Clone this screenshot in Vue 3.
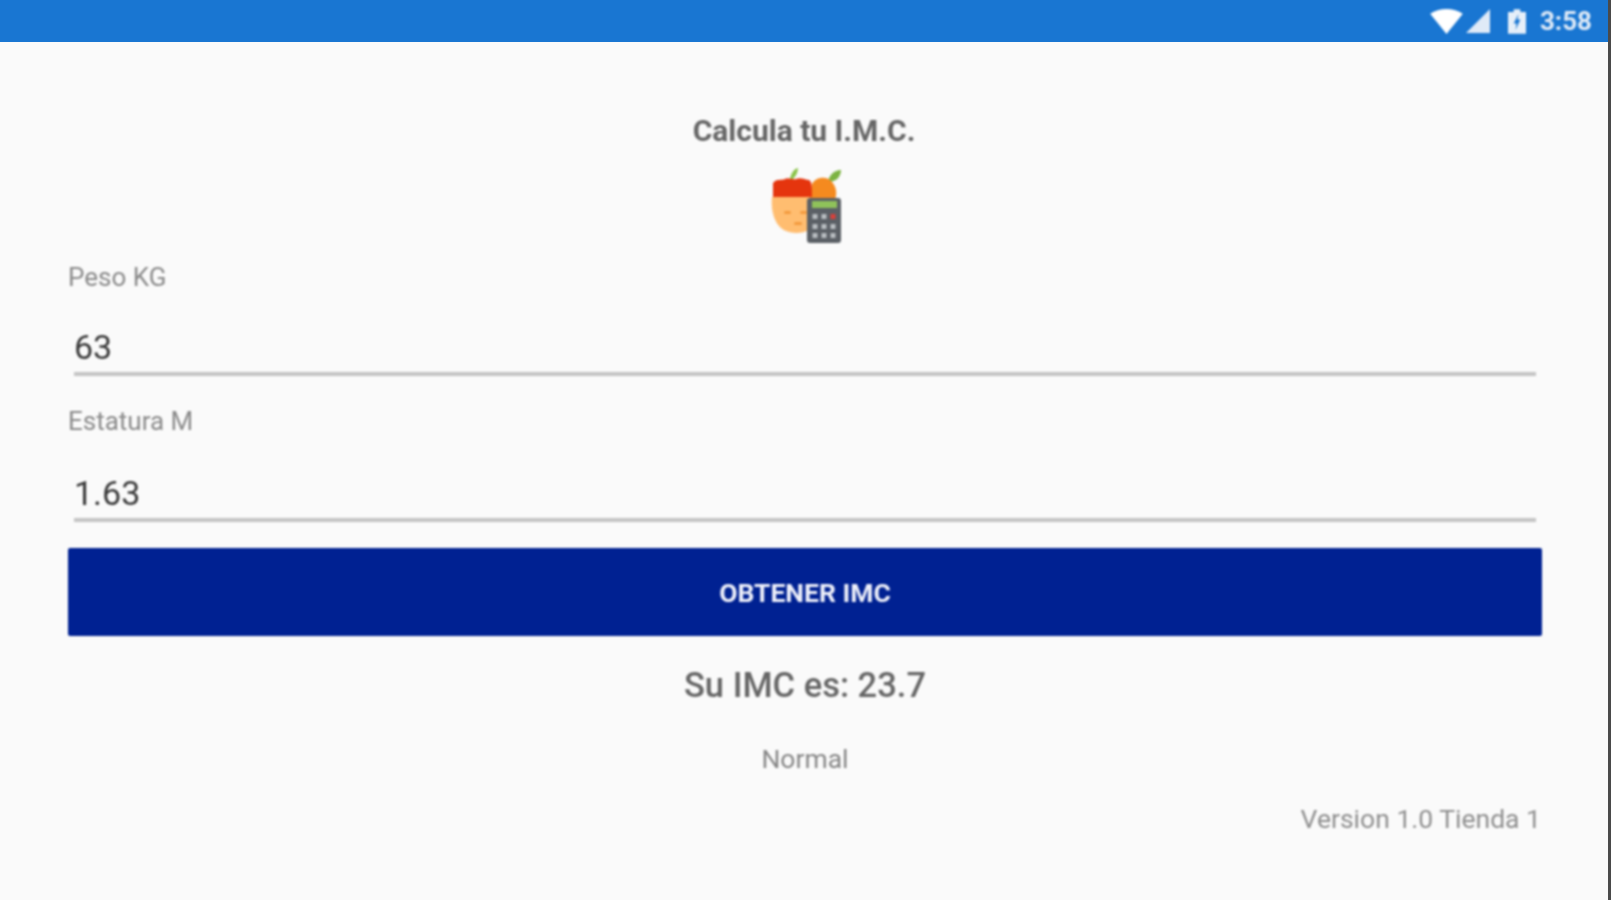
<script setup>
const fields = [
  { label: 'Peso KG', value: '63' },
  { label: 'Estatura M', value: '1.63' }
]
const keys = [
  { x: 44, y: 46, c: '#b9bdc1' }, { x: 53, y: 46, c: '#b9bdc1' }, { x: 62, y: 46, c: '#d8403a' },
  { x: 44, y: 56, c: '#b9bdc1' }, { x: 53, y: 56, c: '#b9bdc1' }, { x: 62, y: 56, c: '#b9bdc1' },
  { x: 44, y: 65, c: '#b9bdc1' }, { x: 53, y: 65, c: '#b9bdc1' }, { x: 62, y: 65, c: '#b9bdc1' }
]
</script>

<template>
  <div class="screen">
    <header class="status">
      <div class="status-items">
        <svg class="wifi" viewBox="0 0 34 26"><path d="M0 5C9-1.500 25-1.500 34 5L17 26Z" fill="#fff"/></svg>
        <svg class="signal" viewBox="0 0 24 24"><path d="M0 24L24 0V24Z" fill="#dfeaf7"/></svg>
        <svg class="battery" viewBox="0 0 19 26">
          <path d="M6 0H13V3H19V26H0V3H6Z" fill="#e6eff9"/>
          <path d="M11 5L6 15H9L8 22L13 11H10Z" fill="#1976d2"/>
        </svg>
        <span class="clock">3:58</span>
      </div>
    </header>
    <main class="body">
      <h1 class="title">Calcula tu I.M.C.</h1>
      <svg class="logo" viewBox="-2 0 72 76">
        <path d="M19 11C20 5 23 1 27 0C27 4 25 8 22 11Z" fill="#8bc34a"/>
        <path d="M57 14C58 7 63 2 70 2C70 9 65 14 57 14Z" fill="#7cb342"/>
        <path d="M41 16C45 8 57 8 61 14C66 20 66 26 64 32H38Z" fill="#f58a1f"/>
        <path d="M2 15C6 10 10 13 14 11C17 9 21 12 25 11C30 9 34 12 38 12C41 14 41 18 41 29H2Z" fill="#e5350e"/>
        <path d="M1 29H38V62C30 66 16 67 8 58C2 51 0 40 1 29Z" fill="#ffbd70"/>
        <g fill="#f39a3e">
          <rect x="13" y="43" width="7" height="3" rx="1.500"/>
          <rect x="29" y="43" width="7" height="3" rx="1.500"/>
          <rect x="23" y="54" width="8" height="3" rx="1.500"/>
        </g>
        <rect x="36" y="30" width="34" height="45" rx="3" fill="#5b6066"/>
        <rect x="41" y="33" width="25" height="7" fill="#8fc25a"/>
        <rect v-for="k in keys" :key="`${k.x}-${k.y}`" :x="k.x - 2.500" :y="k.y" width="5" height="5" :fill="k.c"/>
      </svg>
      <div v-for="f in fields" :key="f.label" class="field">
        <label class="label">{{ f.label }}</label>
        <div class="input">{{ f.value }}</div>
      </div>
      <button class="action">OBTENER IMC</button>
      <p class="result">Su IMC es: 23.7</p>
      <p class="state">Normal</p>
      <p class="version">Version 1.0 Tienda 1</p>
    </main>
  </div>
</template>

<style>
html, body { margin: 0; background: #fafafa; }
</style>

<style scoped>
.screen {
  width: 1611px;
  height: 900px;
  box-sizing: border-box;
  border-right: 3px solid #4a4a4a;
  background: #fafafa;
  font-family: Roboto, "Liberation Sans", sans-serif;
  overflow: hidden;
}
.status {
  height: 42px;
  background: #1976d2;
  display: flex;
  justify-content: flex-end;
}
.status-items {
  display: flex;
  align-items: center;
  padding-right: 16px;
  filter: blur(0.8px);
}
.wifi { width: 33px; height: 25px; margin-right: 3px; }
.signal { width: 24px; height: 24px; margin-right: 18px; }
.battery { width: 18px; height: 25px; margin-right: 14px; }
.clock { font-size: 26px; font-weight: 700; color: #dfeaf7; }
.body {
  padding: 0 66px 0 68px;
  display: flex;
  flex-direction: column;
  filter: blur(0.8px);
}
.title {
  margin: 70px 2px 0 0;
  text-align: center;
  font-size: 30px;
  line-height: 38px;
  font-weight: 700;
  color: #666;
}
.logo { width: 72px; height: 76px; margin: 18px auto 0; display: block; }
.field { display: flex; flex-direction: column; }
.label { font-size: 26px; line-height: 28px; color: #8a8a8a; margin-top: 19px; }
.field + .field .label { margin-top: 31px; }
.input {
  margin: 36px 6px 0;
  padding: 0 0 5px;
  font-size: 34px;
  line-height: 40px;
  color: #3a3a3a;
  border-bottom: 4px solid #c4c4c4;
}
.field + .field .input { margin-top: 38px; }
.action {
  margin-top: 26px;
  height: 88px;
  background: #002192;
  border: 0;
  border-radius: 2px;
  color: #eef0fa;
  font: 700 26.500px Roboto, sans-serif;
}
.result { margin: 29px 0 0; text-align: center; font-size: 34.500px; line-height: 40px; font-weight: 500; color: #666; }
.state { margin: 39px 0 0; text-align: center; font-size: 26.500px; line-height: 30px; color: #868686; }
.version { margin: 30px 1px 0 0; text-align: right; font-size: 26.500px; line-height: 30px; color: #8f8f8f; }
</style>
